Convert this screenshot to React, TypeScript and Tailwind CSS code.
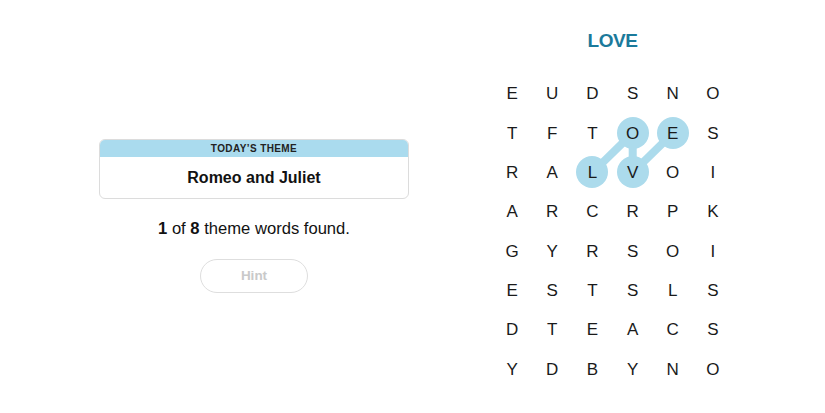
import React from "react";

const rows = [
  "EUDSNO",
  "TFTOES",
  "RALVOI",
  "ARCRPK",
  "GYRSOI",
  "ESTSLS",
  "DTEACS",
  "YDBYNO",
];

const CELL_W = 40.2;
const CELL_H = 39.4;

// selected path for "LOVE": [row, col]
const path: [number, number][] = [
  [2, 2],
  [1, 3],
  [2, 3],
  [1, 4],
];

function isSelected(r: number, c: number) {
  return path.some(([pr, pc]) => pr === r && pc === c);
}

function Board() {
  const pts = path
    .map(([r, c]) => `${c * CELL_W + CELL_W / 2},${r * CELL_H + CELL_H / 2}`)
    .join(" ");

  return (
    <div className="relative h-[315px] w-[241px]">
      <svg
        className="pointer-events-none absolute inset-0"
        width={241}
        height={315}
        viewBox="0 0 241 315"
      >
        <polyline
          points={pts}
          fill="none"
          stroke="#acdbec"
          strokeWidth={8}
          strokeLinecap="round"
          strokeLinejoin="round"
        />
      </svg>
      <div className="relative grid h-full w-full grid-cols-6 grid-rows-8">
        {rows.map((row, r) =>
          row.split("").map((ch, c) => (
            <div key={`${r}-${c}`} className="flex items-center justify-center">
              <span
                className={
                  "flex h-[32px] w-[32px] items-center justify-center rounded-full text-[17px] leading-none text-[#1a1a1a] " +
                  (isSelected(r, c) ? "bg-[#acdbec]" : "")
                }
              >
                {ch}
              </span>
            </div>
          ))
        )}
      </div>
    </div>
  );
}

export default function App() {
  return (
    <div
      className="flex h-[413px] w-[825px] bg-white text-[#121212]"
      style={{ fontFamily: '"Liberation Sans", Arial, sans-serif' }}
    >
      <div className="flex w-[508px] flex-col items-center pt-[139px]">
        <div className="w-[310px] overflow-hidden rounded-[6px] border border-[#dcdcdc]">
          <div className="flex h-[17px] items-center justify-center bg-[#aadbee] text-[10px] font-bold tracking-[0.04em] text-[#222]">
            TODAY’S THEME
          </div>
          <div className="flex h-[41px] items-center justify-center text-[16px] font-bold">
            Romeo and Juliet
          </div>
        </div>
        <p className="mt-[18px] text-[16.6px]">
          <span className="font-bold">1</span> of <span className="font-bold">8</span> theme words found.
        </p>
        <button
          type="button"
          className="mt-[17px] h-[34px] w-[108px] rounded-full border border-[#dedede] text-[13.5px] font-bold text-[#c9c9c9]"
        >
          Hint
        </button>
      </div>
      <div className="ml-[-16px] flex flex-col">
        <div className="flex h-[74px] w-[241px] justify-center pt-[30px]">
          <span className="text-[19px] leading-[22px] font-bold tracking-tight text-[#1b7a9b]">LOVE</span>
        </div>
        <Board />
      </div>
    </div>
  );
}
